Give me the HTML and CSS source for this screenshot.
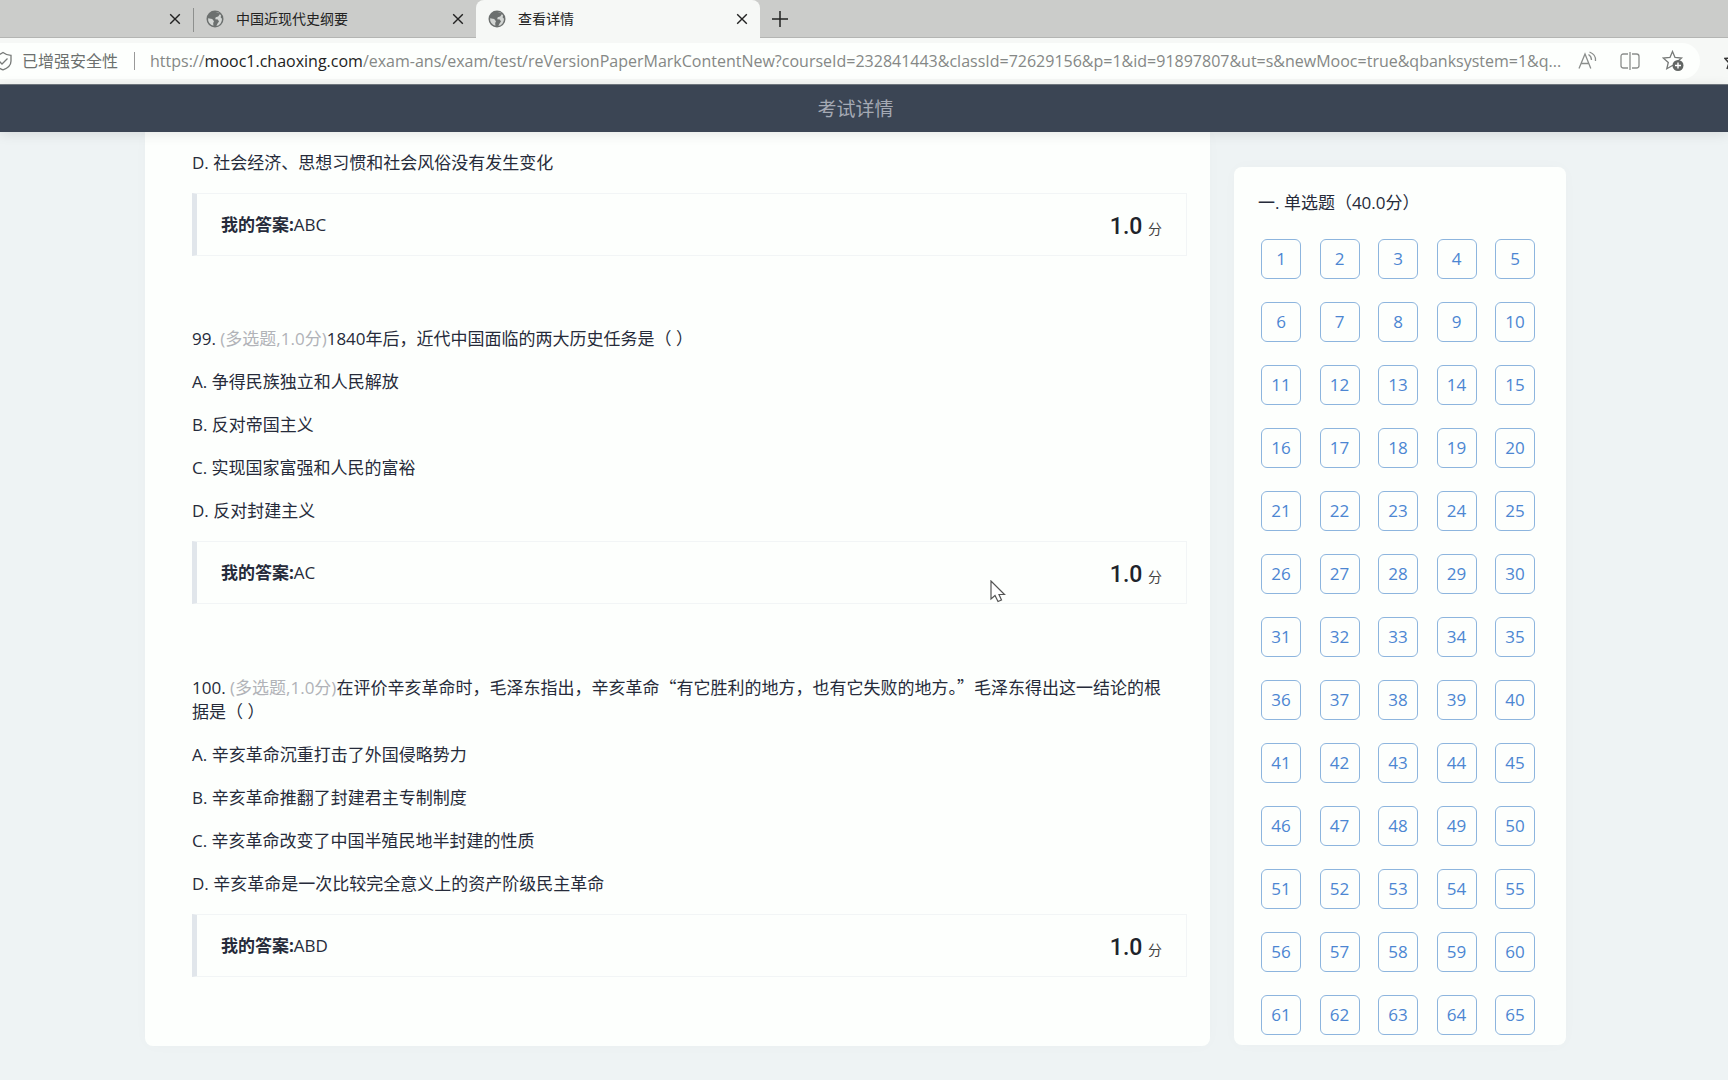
FILE: index.html
```html
<!DOCTYPE html>
<html lang="zh-CN">
<head>
<meta charset="utf-8">
<title>查看详情</title>
<link rel="stylesheet" href="styles.css">
</head>
<body>
<svg class="defs" width="0" height="0" aria-hidden="true">
  <symbol id="globe" viewBox="0 0 18 18"><circle cx="9" cy="9" r="8.5" fill="#6c706f"/><path d="M9.500 2.200 L12.500 2.600 L13.800 4.200 L12.200 6.600 L9.700 7.200 L9.200 9.200 L11.800 9.600 L13 11.600 L11.400 13.800 L10.400 15.900 A7 7 0 0 0 16 8.800 L14.700 7.600 L15 5.300 A7 7 0 0 0 9.500 2.200Z M2.100 8.200 L6.200 9 L8 11.300 L7.200 13 L7.400 15.800 A7 7 0 0 1 2.100 8.200Z" fill="#d3d6d4"/></symbol>
  <symbol id="close" viewBox="0 0 12 12"><path d="M1.200 1.200 10.800 10.800M10.800 1.200 1.200 10.800" stroke="#222" stroke-width="1.400" fill="none"/></symbol>
</svg>
<nav class="tabs">
  <div class="tab tab-first"><button class="close" aria-label="关闭"><svg width="12" height="12"><use href="#close"/></svg></button></div>
  <div class="tab tab-middle"><svg width="18" height="18"><use href="#globe"/></svg><span class="tab-title">中国近现代史纲要</span><button class="close" aria-label="关闭"><svg width="12" height="12"><use href="#close"/></svg></button></div>
  <div class="tab tab-active"><svg width="18" height="18"><use href="#globe"/></svg><span class="tab-title">查看详情</span><button class="close" aria-label="关闭"><svg width="12" height="12"><use href="#close"/></svg></button></div>
  <button class="new-tab" aria-label="新建标签页"><svg width="18" height="18" viewBox="0 0 18 18"><path d="M9 1V17M1 9H17" stroke="#222" stroke-width="1.500"/></svg></button>
</nav>
<div class="toolbar">
  <div class="address">
    <svg width="12" height="20" viewBox="8 0 12 20" fill="none" stroke="#777a78" stroke-width="1.300"><path d="M11 1.500C13.500 3.500 16 4.200 19 4.300V10C19 14 16 17 11 18.800C6 17 3 14 3 10V4.300C6 4.200 8.500 3.500 11 1.500Z"/><path d="M7 10 10 13 15.500 7.500"/></svg>
    <span class="secure">已增强安全性</span>
    <span class="url">https://<b>mooc1.chaoxing.com</b>/exam-ans/exam/test/reVersionPaperMarkContentNew?courseId=232841443&amp;classId=72629156&amp;p=1&amp;id=91897807&amp;ut=s&amp;newMooc=true&amp;qbanksystem=1&amp;q...</span>
    <span class="tools">
      <button aria-label="大声朗读"><svg width="20" height="20" viewBox="0 0 20 20" fill="none" stroke="#8b8e8c" stroke-width="1.300"><path d="M1 17.500 7 3 12.800 17.500M3 12.500H11M10.500 3.500C12.500 4.800 13.500 6.500 13.500 9M11.500 1C15.500 2.500 18 6 17.500 10"/></svg></button>
      <button aria-label="分屏"><svg width="20" height="20" viewBox="0 0 20 20" fill="none" stroke="#8b8e8c" stroke-width="1.300"><path d="M8 3H3.500Q1 3 1 5.500V14.500Q1 17 3.500 17H8M12 3H16.500Q19 3 19 5.500V14.500Q19 17 16.500 17H12M10 1V19"/></svg></button>
      <button aria-label="收藏"><svg width="22" height="22" viewBox="0 0 22 22"><path d="M10.500 1.500 13 7.500 19.500 8 14.500 12.500 16 18.500 10.500 15.500 4.800 18.800 6.300 12.500 1.200 8 8 7.500Z" fill="none" stroke="#777a78" stroke-width="1.300"/><circle cx="16" cy="15.500" r="5.500" fill="#626664"/><path d="M16 12.500V18.500M13 15.500H19" stroke="#fff" stroke-width="1.400"/></svg></button>
    </span>
  </div>
  <svg width="4" height="20" viewBox="0 0 4 20"><path d="M10 1 7.500 7 1 7.500 5 12 3 18" fill="none" stroke="#333" stroke-width="1.500"/></svg>
</div>
<header class="header"><h1>考试详情</h1></header>
<main class="layout">
  <section class="paper">
    <article class="question">
      <p>D. 社会经济、思想习惯和社会风俗没有发生变化</p>
      <div class="answer"><span><strong>我的答案:</strong>ABC</span><span class="score"><b>1.0</b> 分</span></div>
    </article>
    <article class="question">
      <p>99. <span class="kind">(多选题,1.0分)</span>1840年后，近代中国面临的两大历史任务是（ ）</p>
      <p>A. 争得民族独立和人民解放</p>
      <p>B. 反对帝国主义</p>
      <p>C. 实现国家富强和人民的富裕</p>
      <p>D. 反对封建主义</p>
      <div class="answer"><span><strong>我的答案:</strong>AC</span><span class="score"><b>1.0</b> 分</span></div>
    </article>
    <article class="question">
      <p>100. <span class="kind">(多选题,1.0分)</span>在评价辛亥革命时，毛泽东指出，辛亥革命<span class="quote">“</span>有它胜利的地方，也有它失败的地方。<span class="quote">”</span>毛泽东得出这一结论的根据是（ ）</p>
      <p>A. 辛亥革命沉重打击了外国侵略势力</p>
      <p>B. 辛亥革命推翻了封建君主专制制度</p>
      <p>C. 辛亥革命改变了中国半殖民地半封建的性质</p>
      <p>D. 辛亥革命是一次比较完全意义上的资产阶级民主革命</p>
      <div class="answer"><span><strong>我的答案:</strong>ABD</span><span class="score"><b>1.0</b> 分</span></div>
    </article>
  </section>
  <aside class="panel">
    <h2>一. 单选题（40.0分）</h2>
    <div class="numbers">
      <button>1</button><button>2</button><button>3</button><button>4</button><button>5</button>
      <button>6</button><button>7</button><button>8</button><button>9</button><button>10</button>
      <button>11</button><button>12</button><button>13</button><button>14</button><button>15</button>
      <button>16</button><button>17</button><button>18</button><button>19</button><button>20</button>
      <button>21</button><button>22</button><button>23</button><button>24</button><button>25</button>
      <button>26</button><button>27</button><button>28</button><button>29</button><button>30</button>
      <button>31</button><button>32</button><button>33</button><button>34</button><button>35</button>
      <button>36</button><button>37</button><button>38</button><button>39</button><button>40</button>
      <button>41</button><button>42</button><button>43</button><button>44</button><button>45</button>
      <button>46</button><button>47</button><button>48</button><button>49</button><button>50</button>
      <button>51</button><button>52</button><button>53</button><button>54</button><button>55</button>
      <button>56</button><button>57</button><button>58</button><button>59</button><button>60</button>
      <button>61</button><button>62</button><button>63</button><button>64</button><button>65</button>
    </div>
  </aside>
</main>
<svg class="cursor" width="16" height="24" viewBox="0 0 16 24" aria-hidden="true"><path d="M1 1V19L5 15.500 8 21.500 11.500 20 9 14.500H14.500Z" fill="#fff" stroke="#555" stroke-width="1.200"/></svg>
</body>
</html>
```
FILE: styles.css
```css
* { box-sizing: border-box; }
body {
  margin: 0;
  min-height: 100vh;
  background: #eef3f4;
  color: #262b3a;
  font: 17px/24px "Open Sans", "Noto Sans CJK SC", sans-serif;
}
button { font: inherit; border: 0; padding: 0; background: none; display: flex; align-items: center; justify-content: center; }
svg { flex: none; }
.defs { display: block; }

/* Browser chrome */
.tabs { display: flex; height: 38px; background: #cbccca; box-shadow: inset 0 -1px #b4b5b3; }
.tab { display: flex; align-items: center; height: 38px; padding: 0 12px; font-size: 14px; }
.tab-first { width: 193px; }
.tab-middle { width: 283px; padding-left: 13px; position: relative; }
.tab-middle::before { content: ""; position: absolute; left: 0; top: 8px; width: 1px; height: 24px; background: #8e908e; }
.tab-active { width: 284px; background: #f6f8f6; border-radius: 8px 8px 0 0; }
.tab-title { margin-left: 12px; color: #222; }
.close { margin-left: auto; }
.new-tab { width: 40px; }
.toolbar { display: flex; align-items: center; justify-content: space-between; height: 47px; padding: 4px 0 5px; background: #f6f8f6; border-bottom: 1px solid #747b82; }
.address { display: flex; align-items: center; flex: 1; height: 36px; margin-right: 24px; background: #fdfffd; border-radius: 0 18px 18px 0; font-size: 16px; color: #858886; min-width: 0; }
.secure { margin-left: 10px; padding-right: 16px; line-height: 18px; color: #6c706e; border-right: 1px solid #999; white-space: nowrap; }
.url { flex: 1; margin-left: 15px; min-width: 0; white-space: nowrap; overflow: hidden; }
.url b { font-weight: 400; color: #222; }
.tools { display: flex; align-items: center; gap: 22px; padding: 0 16px 0 4px; }

/* Page */
.header { position: relative; height: 47px; padding: 1px 17px 0 0; background: #3b4554; box-shadow: 0 2px 12px rgba(0, 0, 0, .1); text-align: center; }
.header h1 { margin: 0; font-size: 19px; line-height: 46px; font-weight: 400; color: #a5aab4; }
.layout { display: flex; align-items: flex-start; gap: 24px; padding: 0 162px 32px 145px; }
.paper { flex: 1; min-width: 0; padding: 19px 23px 69px 47px; background: #fdfffd; border-radius: 0 0 8px 8px; box-shadow: 0 0 16px rgba(0, 0, 0, .02); }
.question { margin-bottom: 71px; }
.question:last-child { margin-bottom: 0; }
.question p { margin: 0 24px 19px 0; }
.question p:nth-last-child(2) { margin-bottom: 18px; }
.kind { color: #b1b3b8; }
.quote { font-family: "Noto Sans CJK SC", sans-serif; }
.answer { display: flex; align-items: center; justify-content: space-between; height: 63px; padding: 0 24px; border: 1px solid #f2f5f6; border-left: 5px solid #e1e6eb; }
.score { padding-top: 6px; font-size: 14px; color: #444; }
.score b { margin-right: 2px; font-family: Roboto, sans-serif; font-size: 23px; font-weight: 500; color: #20232b; }
.panel { width: 332px; margin-top: 35px; padding: 24px 31px 10px 24px; background: #fdfffd; border-radius: 8px; box-shadow: 0 0 16px rgba(0, 0, 0, .02); }
.panel h2 { margin: 0 0 24px; font-size: 17px; line-height: 24px; font-weight: 400; }
.numbers { display: grid; grid-template-columns: repeat(5, 40px); justify-content: space-between; gap: 23px 0; padding-left: 3px; }
.numbers button { height: 40px; border: 1px solid #8db5de; border-radius: 6px; color: #4c86d2; }
.cursor { position: absolute; left: 990px; top: 580px; }
```
